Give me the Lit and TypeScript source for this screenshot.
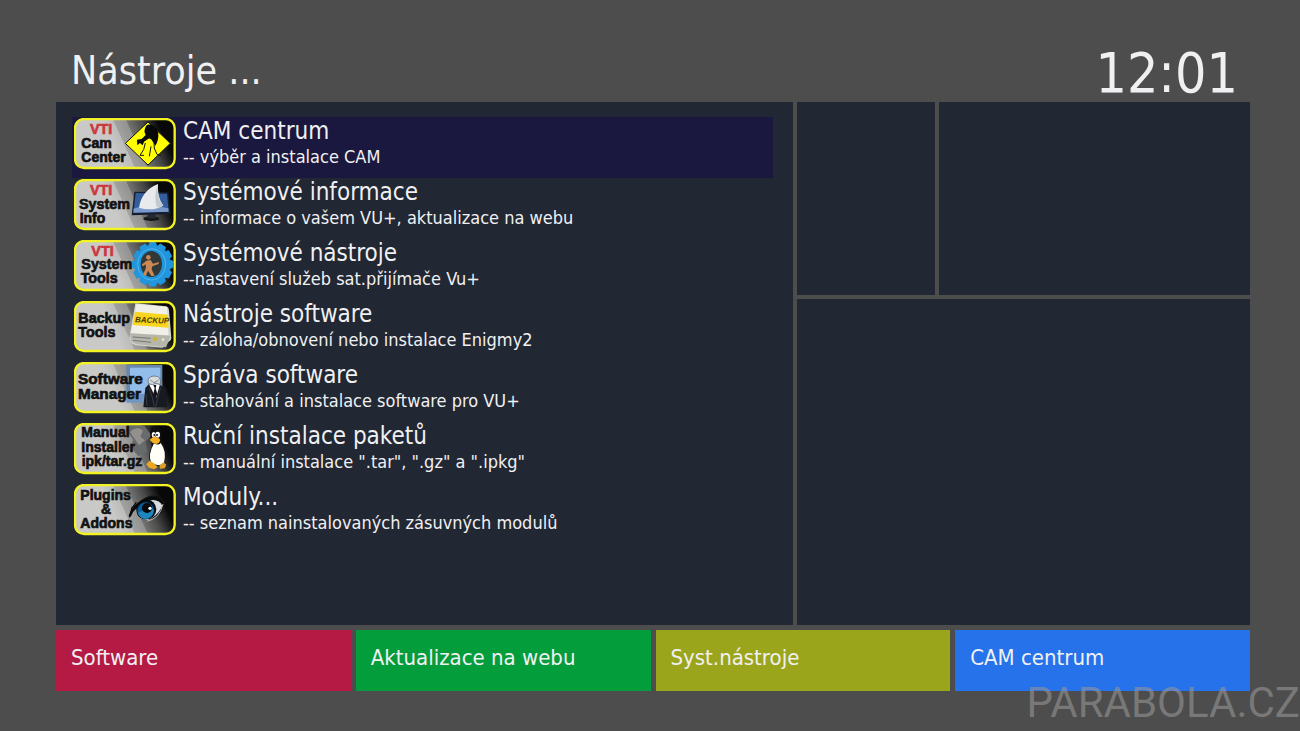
import { LitElement, html, css, svg, TemplateResult } from "lit";
import { customElement, property, state } from "lit/decorators.js";

interface Label {
  text: string;
  x: number;
  y: number;
  size: number;
  brand?: boolean;
}

interface Entry {
  title: string;
  note: string;
  labels: Label[];
  art: TemplateResult;
}

const gear = () => {
  const points: string[] = [];
  const teeth = 12;
  for (let i = 0; i < teeth; i++) {
    const a = (i / teeth) * Math.PI * 2;
    for (const [d, r] of [[-0.22, 53], [-0.15, 61], [0.15, 61], [0.22, 53]]) {
      points.push(`${(260 + Math.cos(a + d) * r).toFixed(1)},${(88 + Math.sin(a + d) * r * 1.08).toFixed(1)}`);
    }
  }
  return points.join(" ");
};

const entries: Entry[] = [
  {
    title: "CAM centrum",
    note: "-- výběr a instalace CAM",
    labels: [
      { text: "VTI", x: 72, y: 62, size: 43, brand: true },
      { text: "Cam", x: 46, y: 105, size: 42 },
      { text: "Center", x: 46, y: 148, size: 42 },
    ],
    art: svg`
      <path d="M246 27 L313 91 L246 156 L178 91Z" fill="#ff0" stroke="#111" stroke-width="3"/>
      <path d="M236 50 Q240 30 256 36 Q276 41 277 62 Q278 83 268 98 L259 84 Q255 74 247 77 L234 86 L230 97 L222 90 L214 97 L213 80 L227 78 L239 66 Q233 58 236 50Z" fill="#090909"/>
      <path d="M238 90 Q236 111 222 127 H234 M264 84 Q261 106 273 124 L285 129 M250 130 L255 100" fill="none" stroke="#111" stroke-width="3"/>`,
  },
  {
    title: "Systémové informace",
    note: "-- informace o vašem VU+, aktualizace na webu",
    labels: [
      { text: "VTI", x: 72, y: 62, size: 43, brand: true },
      { text: "System", x: 39, y: 105, size: 43 },
      { text: "Info", x: 41, y: 147, size: 42 },
    ],
    art: svg`
      <ellipse cx="256" cy="134" rx="24" ry="7" fill="#15171b"/>
      <path d="M245 118h24v15h-24Z" fill="#252a32"/>
      <path d="M205 53 L307 55 L314 120 L197 124Z" fill="#161e30"/>
      <path d="M209 57 L303 59 L308 113 L202 116Z" fill="#345d9b"/>
      <path d="M203 104 Q222 94 244 106 Q268 92 307 103 L308 113 L202 116Z" fill="#7b9acb"/>
      <path d="M276 30 Q273 70 292 95 Q258 113 219 101 Q227 49 276 30Z" fill="#e9eaec"/>
      <path d="M276 32 Q270 68 290 95 Q276 102 272 99 Q262 62 276 32Z" fill="#c2cacd"/>`,
  },
  {
    title: "Systémové nástroje",
    note: "--nastavení služeb sat.přijímače Vu+",
    labels: [
      { text: "VTI", x: 76, y: 62, size: 43, brand: true },
      { text: "System", x: 46, y: 103, size: 43 },
      { text: "Tools", x: 44, y: 144, size: 43 },
    ],
    art: svg`
      <polygon points="${gear()}" fill="#2196dc" stroke="#2196dc" stroke-width="3" stroke-linejoin="round"/>
      <ellipse cx="257" cy="88" rx="42" ry="47" fill="none" stroke="#52b5ec" stroke-width="3"/>
      <ellipse cx="256" cy="87" rx="32" ry="39" fill="#303838"/>
      <circle cx="247" cy="67" r="7" fill="#ca8855"/>
      <path d="M241 77 L254 75 L261 86 L278 81 L278 87 L259 94 L257 103 L266 122 L256 123 L246 107 L239 124 L231 119 L240 98 L239 88 L231 94 L227 89Z" fill="#c98854"/>`,
  },
  {
    title: "Nástroje software",
    note: "-- záloha/obnovení nebo instalace Enigmy2",
    labels: [
      { text: "Backup", x: 37, y: 82, size: 43 },
      { text: "Tools", x: 37, y: 124, size: 43 },
    ],
    art: svg`
      <path d="M208 22 L301 31 Q309 34 309 43 L316 126 Q316 134 308 137 L290 155 L210 148 L196 142 L190 127Z" fill="#d7d7d1"/>
      <path d="M212 24 L303 33 L307 118 L194 112Z" fill="#f0f0e9"/>
      <path d="M207 47 L306 56 L308 95 L200 87Z" fill="#f9d51e"/>
      <path d="M192 112 L314 119 L300 154 L212 145 L195 137Z" fill="#b5b6ac"/>
      <path d="M200 123 L254 127 M201 133 L255 139" stroke="#777" stroke-width="3"/>
      <circle cx="267" cy="129" r="7" fill="#d0b33f"/><circle cx="291" cy="131" r="4" fill="#ece8ca"/>
      <text x="207" y="79" class="backup" transform="rotate(2 207 79)">BACKUP</text>`,
  },
  {
    title: "Správa software",
    note: "-- stahování a instalace software pro VU+",
    labels: [
      { text: "Software", x: 36, y: 82, size: 46 },
      { text: "Manager", x: 36, y: 126, size: 46 },
    ],
    art: svg`
      <path d="M181 24 H289 V125 H181Z" fill="#6787ac"/>
      <path d="M192 32 H283 V111 H192Z" fill="#92bce9"/>
      <path d="M181 110 H280 V137 H181Z" fill="#7196c2"/>
      <path d="M238 93 L249 81 L280 83 L299 93 L304 151 H232Z" fill="#171a20"/>
      <path d="M249 82 L282 82 L270 123Z" fill="#fff"/>
      <path d="M262 84 L271 84 L269 94 L274 111 L268 124 L262 111 L266 94Z" fill="#101216"/>
      <path d="M248 80 Q240 59 264 57 Q289 57 282 83 L270 78 L260 83Z" fill="#d6dadd" stroke="#525962" stroke-width="2"/>
      <path d="M252 69 L264 77 L278 69" fill="none" stroke="#848991" stroke-width="3"/>
      <path d="M249 92 L259 122 L265 148 M284 91 L276 121 L269 149 M240 111 L243 146" fill="none" stroke="#474b54" stroke-width="2"/>`,
  },
  {
    title: "Ruční instalace paketů",
    note: "-- manuální instalace \".tar\", \".gz\" a \".ipkg\"",
    labels: [
      { text: "Manual", x: 46, y: 57, size: 42 },
      { text: "Installer", x: 46, y: 101, size: 42 },
      { text: "ipk/tar.gz", x: 47, y: 144, size: 42 },
    ],
    art: svg`
      <path d="M178 36 Q196 12 236 25 L256 52 L238 73 L244 101 L217 115 L193 86 L203 64Z" fill="#686b6c"/>
      <path d="M192 42 Q213 22 231 38 L223 56 L237 67 L219 82Z" fill="#92918e"/>
      <path d="M253 52 Q249 27 265 24 Q284 22 286 46 L283 66 Q300 83 299 119 L290 145 H257 L249 119 Q249 101 257 86Z" fill="#101010"/>
      <path d="M264 76 Q277 84 284 75 Q303 100 294 134 Q274 150 255 132 Q245 112 264 76Z" fill="#fffef7"/>
      <ellipse cx="263" cy="50" rx="6" ry="8" fill="#fff"/><ellipse cx="275" cy="50" rx="7" ry="9" fill="#fff"/>
      <circle cx="265" cy="51" r="3" fill="#111"/><circle cx="273" cy="51" r="3" fill="#111"/>
      <path d="M251 65 L264 55 L281 62 Q286 71 272 78 L259 74Z" fill="#f5af20"/>
      <path d="M250 128 L264 136 L275 147 L265 154 L249 149 L241 139Z" fill="#eca621"/>
      <path d="M280 143 L292 133 L301 140 L296 151 L282 152Z" fill="#dfa02a"/>`,
  },
  {
    title: "Moduly...",
    note: "-- seznam nainstalovaných zásuvných modulů",
    labels: [
      { text: "Plugins", x: 43, y: 62, size: 42 },
      { text: "&", x: 105, y: 104, size: 42 },
      { text: "Addons", x: 43, y: 147, size: 42 },
    ],
    art: svg`
      <path d="M190 109 Q210 64 251 50 Q283 45 299 70 L291 92 Q264 131 223 116 Q209 108 213 87Z" fill="#111315"/>
      <path d="M213 88 Q231 64 260 63 Q281 64 289 80 Q276 111 245 123 Q220 120 213 88Z" fill="#d8dde0"/>
      <circle cx="241" cy="91" r="30" fill="#070f17"/>
      <circle cx="239" cy="95" r="25" fill="#0a5d96"/>
      <path d="M216 101 Q231 91 239 100 Q248 88 264 93 Q260 118 239 120 Q221 118 216 101Z" fill="#1f86bd"/>
      <circle cx="243" cy="87" r="15" fill="#07090b"/>
      <circle cx="252" cy="88" r="5" fill="#fff"/>
      <path d="M191 112 Q207 72 243 61 Q274 48 292 75" fill="none" stroke="#080808" stroke-width="7"/>
      <path d="M199 84 L190 115 M211 70 L196 90" stroke="#090909" stroke-width="4"/>
      <path d="M243 127 Q282 118 291 75" fill="none" stroke="#b8b8b8" stroke-width="3"/>`,
  },
];

@customElement("menu-badge")
export class MenuBadge extends LitElement {
  @property({ attribute: false }) entry!: Entry;

  static styles = css`
    :host { display: block; width: 102px; height: 52px; }
    .badge { display: block; width: 100%; height: 100%; }
    .label {
      font-family: "Liberation Sans", Arial, sans-serif;
      font-weight: 700;
      fill: #111;
      stroke: #111;
      stroke-width: 2px;
    }
    .brand { fill: #cf353d; stroke: #cf353d; }
    .backup {
      font: italic 700 24px "Liberation Sans", Arial, sans-serif;
      fill: #493900;
    }
  `;

  render() {
    return html`
      <svg class="badge" viewBox="24 15 306 156" aria-hidden="true">
        <defs>
          <linearGradient id="metal" gradientUnits="userSpaceOnUse" x1="132" y1="83" x2="271" y2="20">
            <stop offset="0" stop-color="#c9c9c7"/>
            <stop offset=".22" stop-color="#bcbcba"/>
            <stop offset=".23" stop-color="#a2a2a0"/>
            <stop offset=".45" stop-color="#929290"/>
            <stop offset=".46" stop-color="#737371"/>
            <stop offset=".72" stop-color="#484848"/>
            <stop offset="1" stop-color="#080808"/>
          </linearGradient>
        </defs>
        <rect x="27" y="18" width="299" height="147" rx="27" fill="url(#metal)"/>
        ${this.entry.art}
        ${this.entry.labels.map(
          (l) => svg`<text class="label ${l.brand ? "brand" : ""}" x=${l.x} y=${l.y} font-size=${l.size}>${l.text}</text>`
        )}
        <rect x="27" y="18" width="299" height="147" rx="27" fill="none" stroke="#f3f323" stroke-width="7"/>
      </svg>
    `;
  }
}

@customElement("app-root")
export class AppRoot extends LitElement {
  @state() private selected = 0;

  static styles = css`
    :host {
      display: block;
      box-sizing: border-box;
      min-height: 100vh;
      background: #4d4d4d;
      color: #f0f0f2;
      font-family: "DejaVu Sans Condensed", "DejaVu Sans", sans-serif;
    }
    * { box-sizing: border-box; }
    .screen {
      display: flex;
      flex-direction: column;
      min-height: 100vh;
      padding: 40px 50px 40px 56px;
    }
    .header {
      display: flex;
      justify-content: space-between;
      align-items: flex-end;
      height: 62px;
      padding: 0 12px 0 15px;
    }
    .heading { margin: 0; font-size: 39px; font-weight: 400; line-height: 62px; }
    .clock { font-size: 55px; line-height: 58px; }
    .content {
      display: grid;
      grid-template-columns: 737fr 453fr;
      gap: 4px;
      flex: 1;
    }
    .panel { background: #212733; }
    .menu { margin: 0; padding: 15px 20px 15px 16px; list-style: none; }
    .side {
      display: grid;
      grid-template-columns: 138fr 311fr;
      grid-template-rows: 193fr 326fr;
      gap: 4px;
    }
    .wide { grid-column: 1 / -1; }
    .row {
      display: grid;
      grid-template-columns: 102px 1fr;
      column-gap: 7px;
      width: 100%;
      height: 61px;
      padding: 1px 2px 0;
      border: 0;
      background: none;
      color: inherit;
      font: inherit;
      text-align: left;
      cursor: pointer;
    }
    .selected { background: #1a183e; }
    .title { display: block; font-size: 24px; line-height: 26px; }
    .note { display: block; font-size: 18px; line-height: 26px; }
    .actions {
      display: grid;
      grid-template-columns: repeat(4, 1fr);
      gap: 5px;
      margin-top: 5px;
    }
    .action {
      height: 61px;
      padding: 0 15px 5px;
      border: 0;
      color: #f0f0f2;
      font: inherit;
      font-size: 22px;
      line-height: 28px;
      text-align: left;
      cursor: pointer;
    }
    .red { background: #b51a45; }
    .green { background: #049d3b; }
    .yellow { background: #9ba51c; }
    .blue { background: #2572eb; }
    .watermark {
      position: absolute;
      right: 0;
      bottom: 0;
      color: rgba(150, 150, 150, 0.6);
      font-family: Roboto, "Liberation Sans", sans-serif;
      font-size: 42px;
      line-height: 56px;
      pointer-events: none;
    }
  `;

  render() {
    return html`
      <main class="screen">
        <header class="header">
          <h1 class="heading">Nástroje ...</h1>
          <time class="clock">12:01</time>
        </header>
        <section class="content">
          <ul class="panel menu">
            ${entries.map(
              (entry, i) => html`
                <li>
                  <button class="row ${i === this.selected ? "selected" : ""}" @click=${() => (this.selected = i)}>
                    <menu-badge .entry=${entry}></menu-badge>
                    <span>
                      <span class="title">${entry.title}</span>
                      <span class="note">${entry.note}</span>
                    </span>
                  </button>
                </li>
              `
            )}
          </ul>
          <div class="side">
            <div class="panel"></div>
            <div class="panel"></div>
            <div class="panel wide"></div>
          </div>
        </section>
        <nav class="actions">
          <button class="action red">Software</button>
          <button class="action green">Aktualizace na webu</button>
          <button class="action yellow">Syst.nástroje</button>
          <button class="action blue">CAM centrum</button>
        </nav>
      </main>
      <div class="watermark">PARABOLA.CZ</div>
    `;
  }
}
